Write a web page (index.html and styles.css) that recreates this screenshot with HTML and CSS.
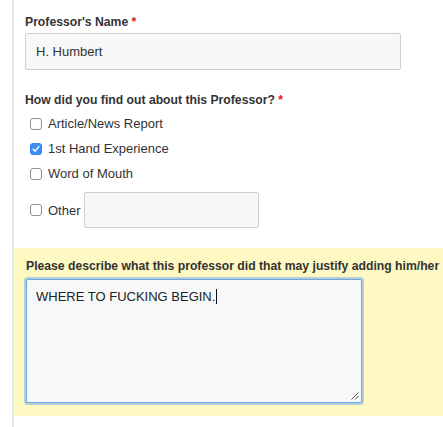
FILE: index.html
```html
<!DOCTYPE html>
<html>
<head>
<meta charset="utf-8">
<link rel="stylesheet" href="styles.css">
</head>
<body>
<div class="page">
  <div class="group first">
    <div class="label">Professor's Name <span class="req">*</span></div>
    <div class="input name">H. Humbert</div>
  </div>
  <div class="group second">
    <div class="label">How did you find out about this Professor? <span class="req">*</span></div>
    <div class="options">
      <div class="opt"><span class="cb"></span><span>Article/News Report</span></div>
      <div class="opt"><span class="cb checked"><svg width="8" height="8" viewBox="0 0 8 8"><path d="M1.2 4.2 L3.2 6.1 L6.8 1.6" fill="none" stroke="#fff" stroke-width="1.5" stroke-linecap="round" stroke-linejoin="round"/></svg></span><span>1st Hand Experience</span></div>
      <div class="opt"><span class="cb"></span><span>Word of Mouth</span></div>
      <div class="opt other"><span class="cb"></span><span>Other</span><div class="input otherbox"></div></div>
    </div>
  </div>
  <div class="highlight">
    <div class="label nowrap">Please describe what this professor did that may justify adding him/her</div>
    <div class="textarea">WHERE TO FUCKING BEGIN.<span class="caret"></span>
      <svg class="grip" width="9" height="9" viewBox="0 0 9 9"><path d="M8.5 1.5 L1.5 8.5 M8.5 5 L5 8.5" stroke="#555" stroke-width="1"/></svg>
    </div>
  </div>
</div>
</body>
</html>
```
FILE: styles.css
```css
html, body {
  margin: 0;
  padding: 0;
  background: #fff;
  overflow: hidden;
}
body {
  font-family: "Liberation Sans", Arial, sans-serif;
  color: #333;
  font-size: 13px;
  width: 443px;
  height: 427px;
}
.page {
  margin-left: 12px;
  border-left: 2px solid #e6e6e6;
  height: 427px;
  box-sizing: border-box;
}
.group {
  padding-left: 11px;
}
.first {
  padding-top: 13px;
}
.label {
  font-weight: bold;
  font-size: 12.2px;
  line-height: 18px;
  color: #333;
}
.nowrap {
  white-space: nowrap;
}
.req {
  color: #e0171a;
}
.input {
  background: #f7f7f7;
  border: 1px solid #cfcfcf;
  border-radius: 2px;
  box-sizing: border-box;
}
.name {
  margin-top: 2px;
  width: 376px;
  height: 37px;
  line-height: 35px;
  padding-left: 10px;
  font-size: 13px;
}
.second {
  padding-top: 21px;
}
.options {
  padding-top: 2px;
  padding-left: 5px;
}
.opt {
  display: flex;
  align-items: center;
  height: 25px;
  gap: 6px;
  font-size: 13px;
}
.cb {
  width: 10px;
  height: 10px;
  border: 1px solid #8f8f8f;
  border-radius: 3px;
  background: #fff;
  display: flex;
  align-items: center;
  justify-content: center;
}
.cb.checked {
  background: #3c8ff7;
  border-color: #3583ea;
}
.opt.other {
  height: 36px;
  margin-top: 6px;
  gap: 6px;
}
.otherbox {
  width: 175px;
  height: 36px;
  margin-left: -3px;
}
.highlight {
  margin-top: 20px;
  background: #fef8c3;
  padding: 9px 0 13px 12px;
}
.textarea {
  margin-top: 4px;
  position: relative;
  width: 336px;
  height: 124px;
  box-sizing: border-box;
  background: #f7f8f9;
  border: 1px solid #6ea6e0;
  box-shadow: 0 0 0 2px rgba(120, 170, 230, 0.55);
  border-radius: 2px;
  padding: 9px 9px;
  font-size: 13px;
  line-height: 16px;
  color: #222;
}
.caret {
  display: inline-block;
  width: 1px;
  height: 15px;
  background: #111;
  vertical-align: -3px;
  margin-left: 1px;
}
.grip {
  position: absolute;
  right: 2px;
  bottom: 2px;
}
```
